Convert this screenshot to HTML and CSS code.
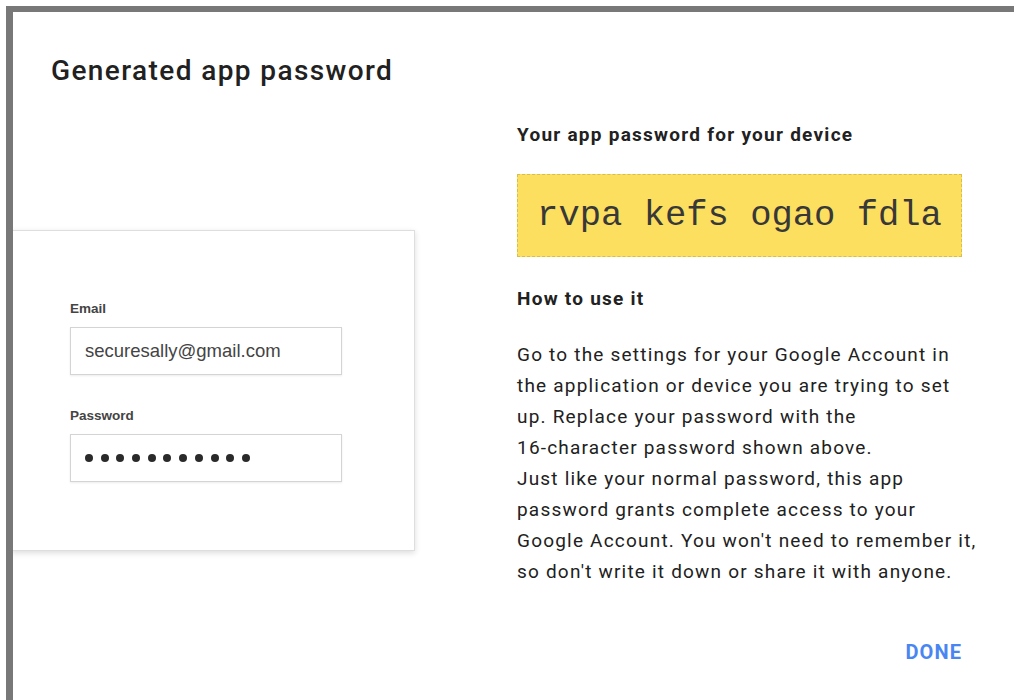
FILE: index.html
```html
<!DOCTYPE html>
<html lang="en">
<head>
<meta charset="utf-8">
<title>Generated app password</title>
<link rel="stylesheet" href="styles.css">
</head>
<body>
<div class="backdrop">
  <div class="dialog">
    <h1 class="dialog-title">Generated app password</h1>
    <div class="dialog-body">
      <div class="preview">
        <div class="signin-card">
          <label class="field-label">Email</label>
          <div class="field-box">securesally@gmail.com</div>
          <label class="field-label field-label-gap">Password</label>
          <div class="field-box dots">
            <span></span><span></span><span></span><span></span><span></span><span></span><span></span><span></span><span></span><span></span><span></span>
          </div>
        </div>
      </div>
      <div class="info">
        <h2 class="info-heading">Your app password for your device</h2>
        <div class="app-password">rvpa kefs ogao fdla</div>
        <h2 class="info-heading how">How to use it</h2>
        <p class="info-text">Go to the settings for your Google Account in<br>the application or device you are trying to set<br>up. Replace your password with the<br>16-character password shown above.<br>Just like your normal password, this app<br>password grants complete access to your<br>Google Account. You won't need to remember it,<br>so don't write it down or share it with anyone.</p>
        <div class="actions"><button class="done-btn">DONE</button></div>
      </div>
    </div>
  </div>
</div>
</body>
</html>
```
FILE: styles.css
```css
html, body {
  margin: 0;
  height: 100%;
  background: #ffffff;
  overflow: hidden;
}

.backdrop {
  margin: 6px 0 0 6px;
  padding: 6px 0 0 7px;
  background: #787878;
  height: calc(100% - 6px);
  box-sizing: border-box;
}

.dialog {
  background: #ffffff;
  height: 100%;
  overflow: hidden;
  padding-top: 42px;
  box-sizing: border-box;
  font-family: Roboto, "Liberation Sans", sans-serif;
  color: #212121;
}

.dialog-title {
  margin: 0 0 0 38px;
  font-size: 28px;
  line-height: 34px;
  font-weight: 500;
  letter-spacing: 1.4px;
  color: #212121;
}

.dialog-body {
  display: grid;
  grid-template-columns: 402px 480px;
  column-gap: 102px;
  margin-top: 35px;
}

.preview {
  padding-top: 107px;
}

.signin-card {
  margin-left: -2px;
  height: 321px;
  box-sizing: border-box;
  border: 1px solid #dedede;
  background: #ffffff;
  box-shadow: 0 2px 6px rgba(0, 0, 0, 0.14);
  padding: 71px 0 0 58px;
  font-family: "Liberation Sans", Arial, sans-serif;
}

.field-label {
  display: block;
  font-size: 13.5px;
  line-height: 14px;
  font-weight: bold;
  color: #444444;
}

.field-label-gap {
  margin-top: 34px;
}

.field-box {
  width: 272px;
  height: 48px;
  box-sizing: border-box;
  margin-top: 11px;
  border: 1px solid #d4d4d4;
  box-shadow: 0 1px 2px rgba(0, 0, 0, 0.08);
  padding: 0 0 0 14px;
  display: flex;
  align-items: center;
  font-size: 18.5px;
  color: #444444;
}

.dots {
  gap: 7.7px;
}

.dots span {
  width: 8px;
  height: 8px;
  border-radius: 50%;
  background: #2a2a2a;
}

.info {
  display: flex;
  flex-direction: column;
}

.info-heading {
  margin: 0;
  font-size: 19px;
  line-height: 24px;
  font-weight: 700;
  letter-spacing: 1.25px;
  color: #212121;
}

.app-password {
  margin-top: 27px;
  width: 445px;
  height: 83px;
  box-sizing: border-box;
  background: #fddf5f;
  border: 1px dashed #d8bd50;
  display: flex;
  align-items: center;
  justify-content: center;
  font-family: "Liberation Mono", "Courier New", monospace;
  font-size: 35.5px;
  color: #383838;
}

.how {
  margin-top: 30px;
}

.info-text {
  margin: 28px 0 0;
  font-size: 19px;
  line-height: 31px;
  letter-spacing: 1.2px;
  color: #212121;
  white-space: nowrap;
}

.actions {
  width: 445px;
  display: flex;
  justify-content: flex-end;
  margin-top: 53px;
}

.done-btn {
  border: 0;
  background: none;
  padding: 0;
  font-family: Roboto, "Liberation Sans", sans-serif;
  font-size: 20px;
  line-height: 24px;
  font-weight: 700;
  letter-spacing: 1.1px;
  color: #4a86f1;
  cursor: pointer;
}
```
